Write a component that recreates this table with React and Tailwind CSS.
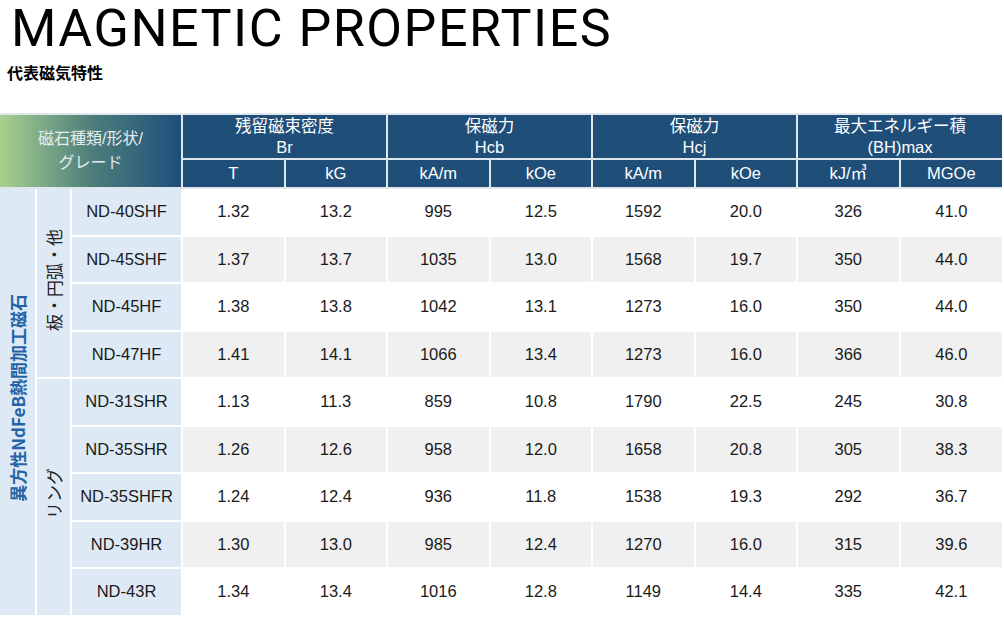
import React from 'react';

const rows = [
  ['ND-40SHF', '1.32', '13.2', '995', '12.5', '1592', '20.0', '326', '41.0'],
  ['ND-45SHF', '1.37', '13.7', '1035', '13.0', '1568', '19.7', '350', '44.0'],
  ['ND-45HF', '1.38', '13.8', '1042', '13.1', '1273', '16.0', '350', '44.0'],
  ['ND-47HF', '1.41', '14.1', '1066', '13.4', '1273', '16.0', '366', '46.0'],
  ['ND-31SHR', '1.13', '11.3', '859', '10.8', '1790', '22.5', '245', '30.8'],
  ['ND-35SHR', '1.26', '12.6', '958', '12.0', '1658', '20.8', '305', '38.3'],
  ['ND-35SHFR', '1.24', '12.4', '936', '11.8', '1538', '19.3', '292', '36.7'],
  ['ND-39HR', '1.30', '13.0', '985', '12.4', '1270', '16.0', '315', '39.6'],
  ['ND-43R', '1.34', '13.4', '1016', '12.8', '1149', '14.4', '335', '42.1'],
];

const font = "font-['Liberation_Sans','Noto_Sans_CJK_JP',sans-serif]";
const sideways = '[writing-mode:vertical-rl] [text-orientation:sideways] rotate-180';

const App = () => {
  return (
    <div className={`w-[1004px] min-h-[622px] bg-white ${font}`}>
      <h1 className="pl-[11px] h-[58px] font-['Roboto',sans-serif] font-normal text-[52px] leading-[58px] tracking-[1.5px] text-black whitespace-nowrap">
        MAGNETIC PROPERTIES
      </h1>
      <p className="pl-[7px] mt-[4px] text-[16px] leading-[20px] font-bold text-black font-['Noto_Sans_CJK_JP',sans-serif]">
        代表磁気特性
      </p>
      <table className="mt-[31px] w-[1002px] table-fixed border-collapse text-[16.5px] text-[#1a1a1a]">
        <colgroup>
          <col className="w-[36px]" />
          <col className="w-[35px]" />
          <col className="w-[111px]" />
          {Array.from({ length: 8 }).map((_, i) => (
            <col key={i} className="w-[102.5px]" />
          ))}
        </colgroup>
        <thead className="text-white text-[16.5px] leading-[21px]">
          <tr className="h-[45px]">
            <th
              colSpan={3}
              rowSpan={2}
              className="border-2 border-[#dfe6ee] border-l-0 font-normal text-[#e4ebef] text-[16px] leading-[24px] bg-gradient-to-r from-[#a9d18e] via-[#4e7f7a] to-[#1f4e79]"
            >
              磁石種類/形状/
              <br />
              グレード
            </th>
            <th colSpan={2} className="border-2 border-[#dfe6ee] bg-[#1f4e79] font-normal">
              残留磁束密度
              <br />
              Br
            </th>
            <th colSpan={2} className="border-2 border-[#dfe6ee] bg-[#1f4e79] font-normal">
              保磁力
              <br />
              Hcb
            </th>
            <th colSpan={2} className="border-2 border-[#dfe6ee] bg-[#1f4e79] font-normal">
              保磁力
              <br />
              Hcj
            </th>
            <th colSpan={2} className="border-2 border-[#dfe6ee] border-r-0 bg-[#1f4e79] font-normal">
              最大エネルギー積
              <br />
              (BH)max
            </th>
          </tr>
          <tr className="h-[29px]">
            {['T', 'kG', 'kA/m', 'kOe', 'kA/m', 'kOe', 'kJ/㎥', 'MGOe'].map((u, i) => (
              <th key={i} className="border-2 border-[#dfe6ee] bg-[#1f4e79] font-normal text-[16.5px] last:border-r-0">
                {u}
              </th>
            ))}
          </tr>
        </thead>
        <tbody>
          {rows.map((r, i) => (
            <tr key={r[0]} className={`h-[47.5px] ${i % 2 === 1 ? 'bg-[#f0f0f0]' : 'bg-white'}`}>
              {i === 0 && (
                <td rowSpan={9} className="border-2 border-white border-l-0 bg-[#dde9f5] text-center align-middle">
                  <span className={`inline-block ${sideways} font-bold text-[17px] text-[#2563a6] font-['Noto_Sans_CJK_JP',sans-serif]`}>
                    異方性NdFeB熱間加工磁石
                  </span>
                </td>
              )}
              {i === 0 && (
                <td rowSpan={4} className="border-2 border-white bg-[#dde9f5] text-center align-middle">
                  <span className={`inline-block ${sideways} text-[17px] text-[#222] font-['Noto_Sans_CJK_JP',sans-serif]`}>
                    板・円弧・他
                  </span>
                </td>
              )}
              {i === 4 && (
                <td rowSpan={5} className="border-2 border-white bg-[#dde9f5] text-center align-middle">
                  <span className={`inline-block ${sideways} text-[17px] text-[#222] font-['Noto_Sans_CJK_JP',sans-serif]`}>
                    リング
                  </span>
                </td>
              )}
              {r.map((c, j) => (
                <td
                  key={j}
                  className={`border-2 border-white text-center align-middle ${j === 0 ? 'bg-[#dde9f5]' : ''} ${j === 8 ? 'border-r-0' : ''}`}
                >
                  {c}
                </td>
              ))}
            </tr>
          ))}
        </tbody>
      </table>
    </div>
  );
};

export default App;
